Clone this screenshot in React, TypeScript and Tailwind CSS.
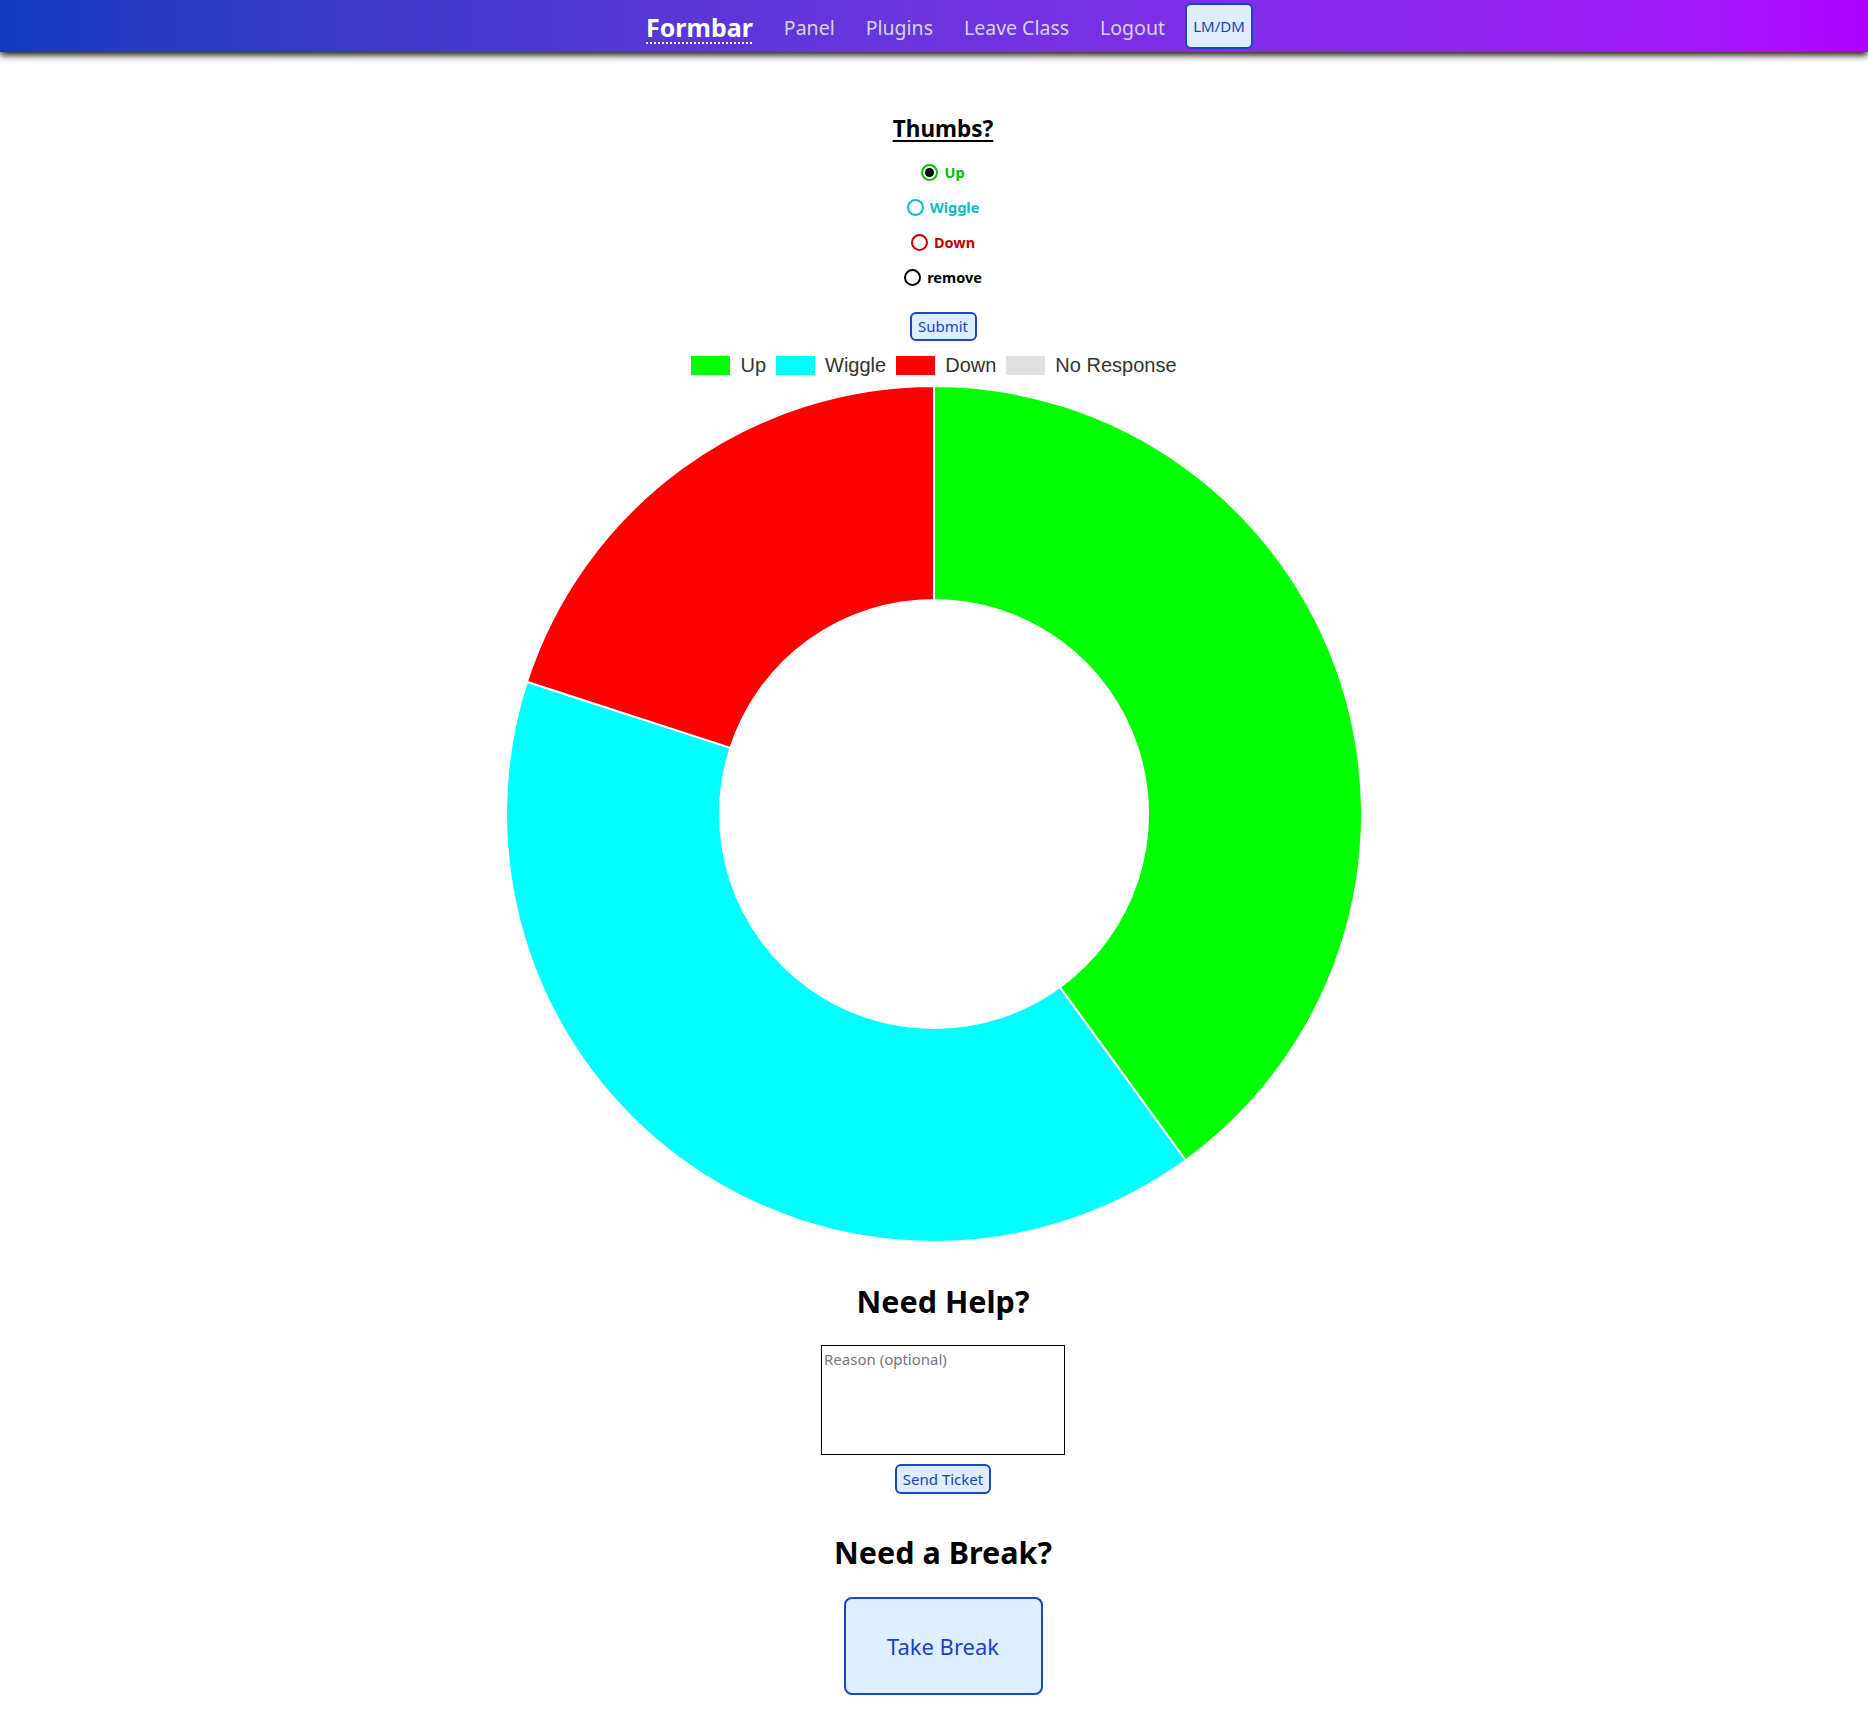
import React, { useState } from "react"

const FONT = { fontFamily: '"Noto Sans", "Open Sans", sans-serif' }
const CHART_FONT = { fontFamily: '"Liberation Sans", Arial, sans-serif' }

interface Option {
  id: string
  label: string
  ring: string
  text: string
}

const options: Option[] = [
  { id: "up", label: "Up", ring: "border-[#00c400]", text: "text-[#00c000]" },
  { id: "wiggle", label: "Wiggle", ring: "border-[#00c0c0]", text: "text-[#00bebe]" },
  { id: "down", label: "Down", ring: "border-[#c80000]", text: "text-[#c00000]" },
  { id: "remove", label: "remove", ring: "border-black", text: "text-black" },
]

const legend = [
  { label: "Up", color: "bg-[#00ff00]" },
  { label: "Wiggle", color: "bg-[#00ffff]" },
  { label: "Down", color: "bg-[#ff0000]" },
  { label: "No Response", color: "bg-[#e0e0e0]" },
]

function NavBar() {
  return (
    <nav className="relative z-10 flex h-[52px] items-center justify-center bg-gradient-to-r from-[#0e3ac0] to-[#ad00ff] pl-[31px] shadow-[0_3px_7px_rgba(0,0,0,0.95)]">
      <a className="mt-[3px] text-[25px] font-bold leading-none text-white underline decoration-dotted decoration-[2px] underline-offset-[5px]">
        Formbar
      </a>
      <div className="ml-[31px] mt-[4px] flex items-center gap-[31px] text-[19.5px] text-[#d4d4e8]">
        <a>Panel</a>
        <a>Plugins</a>
        <a>Leave Class</a>
        <a>Logout</a>
      </div>
      <button className="ml-[20px] h-[46px] w-[68px] rounded-[6px] border-2 border-[#1747c6] bg-[#ddeeff] text-[15px] text-[#1d3fc0]">
        LM/DM
      </button>
    </nav>
  )
}

function Donut() {
  return (
    <svg width="858" height="858" viewBox="-1 -1 858 858" className="block">
      <g stroke="#ffffff" strokeWidth="2" strokeLinejoin="round">
        <path d="M428,0 A428,428 0 0 1 679.57,774.26 L553.79,601.13 A214,214 0 0 0 428,214 Z" fill="#00ff00" />
        <path d="M679.57,774.26 A428,428 0 0 1 20.95,295.74 L224.47,361.87 A214,214 0 0 0 553.79,601.13 Z" fill="#00ffff" />
        <path d="M20.95,295.74 A428,428 0 0 1 428,0 L428,214 A214,214 0 0 0 224.47,361.87 Z" fill="#ff0000" />
      </g>
    </svg>
  )
}

export default function App() {
  const [choice, setChoice] = useState("up")

  return (
    <div className="min-h-[1714px] bg-white" style={FONT}>
      <NavBar />

      <div className="flex flex-col items-center pl-[18px]">
        <h2 className="mt-[62px] text-[22.5px] font-bold leading-[30px] text-black underline decoration-[2px] underline-offset-[3px]">
          Thumbs?
        </h2>
        <div className="mt-[11px] flex flex-col items-center">
          {options.map((o) => (
            <label
              key={o.id}
              className="flex h-[35px] cursor-pointer items-center gap-[6px]"
              onClick={() => setChoice(o.id)}
            >
              <span className={`flex h-[17px] w-[17px] items-center justify-center rounded-full border-2 bg-white ${o.ring}`}>
                {choice === o.id && <span className="h-[9px] w-[9px] rounded-full bg-black" />}
              </span>
              <span className={`text-[14.5px] font-bold leading-none ${o.text}`}>{o.label}</span>
            </label>
          ))}
        </div>
        <button className="mt-[17px] h-[29px] w-[67px] rounded-[6px] border-2 border-[#1747c6] bg-[#ddeeff] text-[15px] leading-none text-[#1d3fc0]">
          Submit
        </button>
      </div>

      <div className="mt-[4px] flex flex-col items-center">
        <div className="flex h-[40px] items-center gap-[10px] text-[20px] text-[#333333]" style={CHART_FONT}>
          {legend.map((l) => (
            <div key={l.label} className="flex items-center gap-[10px]">
              <span className={`h-[19px] w-[39px] ${l.color}`} />
              <span className="leading-none">{l.label}</span>
            </div>
          ))}
        </div>
        <Donut />
      </div>

      <div className="flex flex-col items-center pl-[18px]">
        <h2 className="mt-[38px] text-[30.5px] font-bold leading-[40px] text-black">Need Help?</h2>
        <textarea
          placeholder="Reason (optional)"
          className="mt-[24px] block h-[110px] w-[244px] resize-none border border-black px-[2px] py-[3px] text-[15px] leading-[20px] placeholder:text-[#777777] focus:outline-none"
        />
        <button className="mt-[9px] h-[30px] w-[96px] rounded-[6px] border-2 border-[#1747c6] bg-[#ddeeff] text-[15px] leading-none text-[#1d3fc0]">
          Send Ticket
        </button>

        <h2 className="mt-[38px] text-[30.5px] font-bold leading-[40px] text-black">Need a Break?</h2>
        <button className="mt-[25px] h-[98px] w-[199px] rounded-[8px] border-2 border-[#1747c6] bg-[#ddeeff] text-[22px] text-[#1d3fc0]">
          Take Break
        </button>
      </div>
    </div>
  )
}
